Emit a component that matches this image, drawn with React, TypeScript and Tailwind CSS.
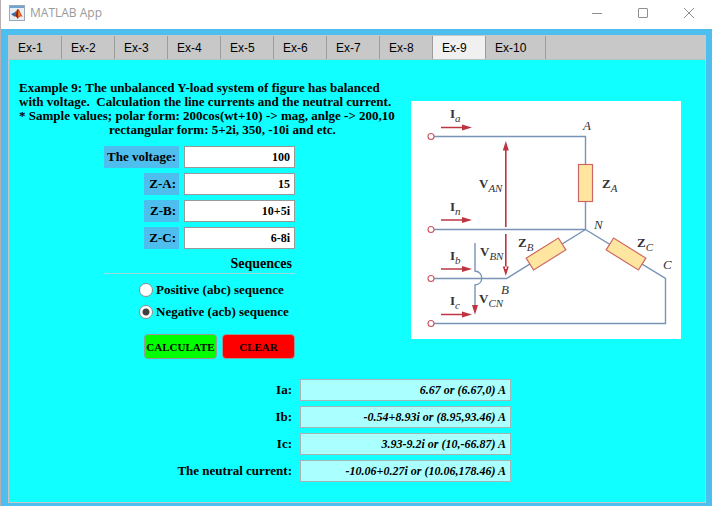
import { useState } from "react";

const tabs = ["Ex-1", "Ex-2", "Ex-3", "Ex-4", "Ex-5", "Ex-6", "Ex-7", "Ex-8", "Ex-9", "Ex-10"];

const inputs = [
  { id: "voltage", label: "The voltage:", value: "100" },
  { id: "za", label: "Z-A:", value: "15" },
  { id: "zb", label: "Z-B:", value: "10+5i" },
  { id: "zc", label: "Z-C:", value: "6-8i" },
];

const results = [
  { id: "ia", label: "Ia:", value: "6.67 or (6.67,0) A" },
  { id: "ib", label: "Ib:", value: "-0.54+8.93i or (8.95,93.46) A" },
  { id: "ic", label: "Ic:", value: "3.93-9.2i or (10,-66.87) A" },
  { id: "in", label: "The neutral current:", value: "-10.06+0.27i or (10.06,178.46) A" },
];

function MatlabLogo() {
  return (
    <svg width="16" height="16" viewBox="0 0 16 16" aria-hidden="true">
      <rect x="0.5" y="0.5" width="15" height="15" fill="#e9eff5" stroke="#9aa9b8" />
      <rect x="1" y="1" width="14" height="2" fill="#6fa3d0" />
      <path d="M2 9 L5.5 7.5 L8 5 L6.5 11 L5 11.5 Z" fill="#2f6ea8" />
      <path d="M5 11.5 C6.500 10 7.500 4 9 4 C10.500 4 11.500 9 14 12 C12 10.500 11 11 8.500 14 C8 12 7 11 5 11.500 Z" fill="#d9541e" />
      <path d="M9 4 C9.500 7 9 11 8.500 14 C8 12 7 11 6 11 C7.500 9 8 5 9 4 Z" fill="#8c2414" />
      <path d="M9.500 6 L11 10 L9.500 11.500 Z" fill="#f5a02c" />
    </svg>
  );
}

function TitleBar() {
  return (
    <header className="flex h-[29px] items-center bg-white pb-1 pl-2">
      <MatlabLogo />
      <h1 className="ml-[5px] flex-1 pt-px font-['Open_Sans',sans-serif] text-[12px] leading-4 text-[#999999]">MATLAB App</h1>
      <button type="button" aria-label="Minimize" className="flex h-full w-[46px] items-center justify-center">
        <svg width="10" height="10" viewBox="0 0 10 10"><path d="M0 5.500H10" stroke="#8f8f8f" /></svg>
      </button>
      <button type="button" aria-label="Maximize" className="flex h-full w-[46px] items-center justify-center">
        <svg width="10" height="10" viewBox="0 0 10 10"><rect x="0.5" y="0.5" width="9" height="9" rx="0.5" fill="none" stroke="#8f8f8f" /></svg>
      </button>
      <button type="button" aria-label="Close" className="flex h-full w-[46px] items-center justify-center">
        <svg width="10" height="10" viewBox="0 0 10 10"><path d="M0 0L10 10M10 0L0 10" stroke="#8f8f8f" /></svg>
      </button>
    </header>
  );
}

function Arrow({ y }: { y: number }) {
  return (
    <g>
      <path d={`M30 ${y}H54`} stroke="#bd3540" strokeWidth="1.5" />
      <path d={`M51 ${y - 3}L61 ${y}L51 ${y + 3}Z`} fill="#bd3540" />
    </g>
  );
}

function Symbol({ x, y, main, sub }: { x: number; y: number; main: string; sub: string }) {
  return (
    <text x={x} y={y} fontSize="13" fontWeight="700">
      {main}
      <tspan dy="4" fontSize="11" fontWeight="400" fontStyle="italic">{sub}</tspan>
    </text>
  );
}

function Circuit() {
  return (
    <svg
      viewBox="0 0 270 238"
      role="img"
      aria-label="Unbalanced Y-load circuit"
      className="block w-full bg-white font-['Liberation_Serif',serif]"
    >
      <g fill="none" stroke="#7793b5" strokeWidth="1.4">
        <path d="M23 35.500H174.500V128.500" />
        <path d="M23 128.500H174.500" />
        <path d="M23 177.500H95.500L174.500 128.500L254.500 177.500V222.500H23" />
        <path d="M64 142V170C73 171 73 183 64 184V206" />
      </g>
      <g fill="#ffe6a0" stroke="#cc6660" strokeWidth="1.2">
        <rect x="167.500" y="63.500" width="14" height="37" />
        <rect x="-19" y="-7" width="38" height="14" transform="translate(135 153) rotate(-32)" />
        <rect x="-19" y="-7" width="38" height="14" transform="translate(215 153) rotate(32)" />
      </g>
      <g fill="#fff" stroke="#cc5560" strokeWidth="1.1">
        <circle cx="20" cy="35.500" r="3" />
        <circle cx="20" cy="128.500" r="3" />
        <circle cx="20" cy="177.500" r="3" />
        <circle cx="20" cy="222.500" r="3" />
      </g>
      <Arrow y={26.5} />
      <Arrow y={119} />
      <Arrow y={168} />
      <Arrow y={213.5} />
      <g fill="#bd3540" stroke="none">
        <path d="M94 48H95.600V126H94ZM91.800 49.500L94.800 40L97.800 49.500Z" />
        <path d="M94 133H95.600V168H94ZM91.800 165.500L94.800 175L97.800 165.500Z" />
        <path d="M61 204L64 213.500L67 204Z" />
      </g>
      <g fill="#333338">
        <Symbol x={39} y={17} main="I" sub="a" />
        <Symbol x={39} y={110} main="I" sub="n" />
        <Symbol x={39} y={159} main="I" sub="b" />
        <Symbol x={39} y={204} main="I" sub="c" />
        <Symbol x={68} y={87} main="V" sub="AN" />
        <Symbol x={69} y={155} main="V" sub="BN" />
        <Symbol x={68} y={202} main="V" sub="CN" />
        <Symbol x={191} y={87} main="Z" sub="A" />
        <Symbol x={107} y={146} main="Z" sub="B" />
        <Symbol x={226} y={146} main="Z" sub="C" />
        <g fontSize="13" fontStyle="italic" fontWeight="400">
          <text x="172" y="29">A</text>
          <text x="183" y="128">N</text>
          <text x="90" y="193">B</text>
          <text x="252" y="168">C</text>
        </g>
      </g>
    </svg>
  );
}

export default function App() {
  const [sequence, setSequence] = useState("negative");
  const [values, setValues] = useState(inputs.map((f) => f.value));

  return (
    <div className="flex min-h-screen flex-col overflow-hidden border-l border-[#b9aeb4] bg-[#4dbeee]">
      <TitleBar />
      <main className="mt-[6px] mr-[6px] mb-1 ml-[7px] flex flex-1 flex-col border border-[#c8c8c8] bg-[#10ffff] font-['Liberation_Serif',serif] text-[13px] leading-[14px] font-bold text-black">
        <nav role="tablist" className="flex h-[24px] border-b border-[#b4c4c4] bg-[#c8c8c8] font-['Liberation_Sans',sans-serif] text-[12px] font-normal">
          {tabs.map((tab) => (
            <button
              key={tab}
              type="button"
              role="tab"
              aria-selected={tab === "Ex-9"}
              className={`border-r border-[#9c9c9c] pl-[9px] ${tab === "Ex-10" ? "w-[60px]" : "w-[53px]"} ${tab === "Ex-9" ? "bg-[#f0f0f0]" : ""} text-left whitespace-nowrap`}
            >
              {tab}
            </button>
          ))}
        </nav>

        <section className="flex items-start pt-[21px] pr-6 pl-[10px]">
          <div className="w-[392px] shrink-0">
            <p className="whitespace-pre">
              Example 9: The unbalanced Y-load system of figure has balanced{"\n"}
              with voltage.  Calculation the line currents and the neutral current.{"\n"}
              * Sample values; polar form: 200cos(wt+10) -&gt; mag, anlge -&gt; 200,10
            </p>
            <p className="pl-[90px]">rectangular form: 5+2i, 350, -10i and etc.</p>

            <form className="ml-[85px] w-[191px]" onSubmit={(e) => e.preventDefault()}>
              <div className="flex flex-col gap-[5px] pt-[9px]">
                {inputs.map((field, i) => (
                  <div key={field.id} className="flex h-[22px] items-stretch justify-end gap-[5px]">
                    <label
                      htmlFor={field.id}
                      className={`flex items-center justify-end bg-[#4dbeee] pr-[3px] whitespace-nowrap ${i === 0 ? "w-[75px]" : "w-[35px]"}`}
                    >
                      {field.label}
                    </label>
                    <input
                      id={field.id}
                      value={values[i]}
                      onChange={(e) => setValues(values.map((v, j) => (j === i ? e.target.value : v)))}
                      className="w-[111px] border border-[#999999] bg-white pr-1 text-right text-[12px] outline-none"
                    />
                  </div>
                ))}
              </div>

              <fieldset>
                <legend className="w-full border-b border-[#a0dcdc] pt-2 pr-[3px] pb-[2px] text-right text-[14px] leading-[14px]">Sequences</legend>
                <div className="flex flex-col gap-2 pt-[9px] pl-[35px]">
                  {[
                    { id: "positive", label: "Positive (abc) sequence" },
                    { id: "negative", label: "Negative (acb) sequence" },
                  ].map((option) => (
                    <label key={option.id} className="flex h-[14px] items-center gap-[3px] whitespace-nowrap">
                      <input
                        type="radio"
                        name="sequence"
                        checked={sequence === option.id}
                        onChange={() => setSequence(option.id)}
                        className="size-[14px] shrink-0 appearance-none rounded-full border border-[#8c8c8c] bg-white checked:bg-[radial-gradient(circle,#404040_3px,#ffffff_4px)]"
                      />
                      {option.label}
                    </label>
                  ))}
                </div>
              </fieldset>

              <div className="mt-[15px] flex h-[25px] justify-end gap-[5px] text-[11px]">
                <button type="submit" className="w-[73px] rounded border border-[#999999] bg-[#00ff00]">CALCULATE</button>
                <button type="button" className="w-[73px] rounded border border-[#999999] bg-[#ff0000]" onClick={() => setValues(inputs.map(() => ""))}>
                  CLEAR
                </button>
              </div>
            </form>
          </div>
          <figure className="mt-5 flex-1">
            <Circuit />
          </figure>
        </section>

        <section className="mt-[20px] mb-5 flex w-[502px] flex-col gap-[5px]">
          {results.map((field) => (
            <div key={field.id} className="flex h-[22px] items-center justify-end gap-2">
              <label htmlFor={field.id}>{field.label}</label>
              <input
                id={field.id}
                readOnly
                value={field.value}
                className="h-full w-[211px] border border-[#a5b5b5] bg-[#aaffff] pr-1 text-right text-[12px] italic outline-none"
              />
            </div>
          ))}
        </section>
      </main>
    </div>
  );
}
